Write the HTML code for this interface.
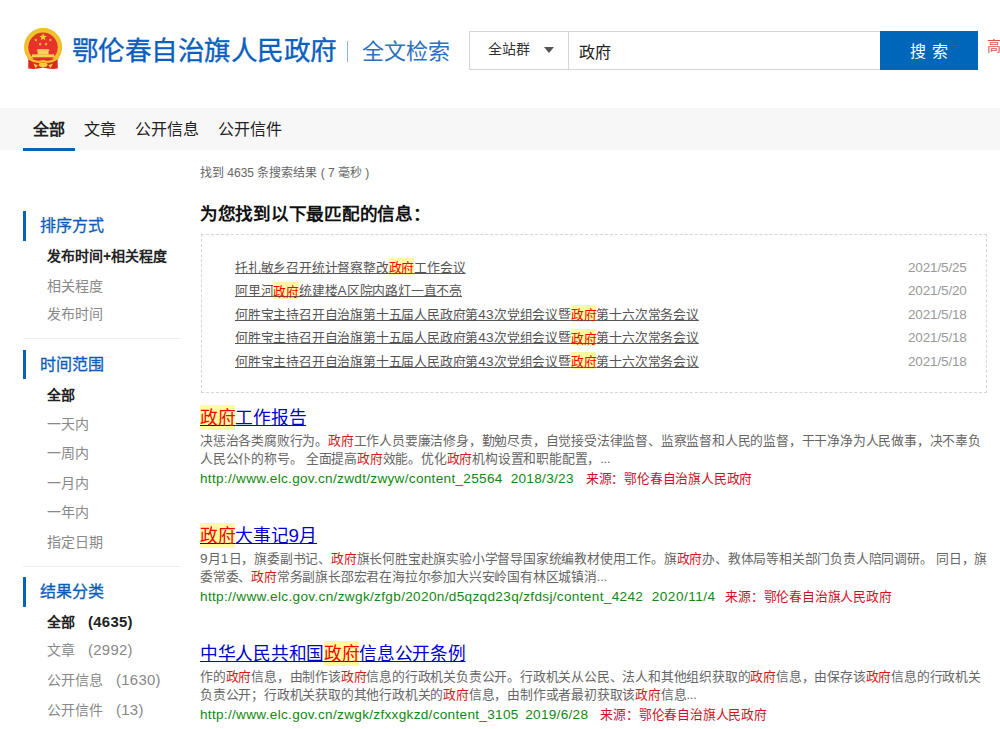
<!DOCTYPE html>
<html lang="zh-CN">
<head>
<meta charset="utf-8">
<style>
*{margin:0;padding:0;box-sizing:border-box}
html,body{width:1000px;height:729px;overflow:hidden;background:#fff}
body{font-family:"Liberation Sans",sans-serif;color:#333;position:relative}
.a{position:absolute;white-space:nowrap}
#title{left:72px;top:30.7px;font-size:26.6px;letter-spacing:-0.55px;line-height:40px;color:#0b5fbf;-webkit-text-stroke:.35px #0b5fbf}
#sep{left:347px;top:41px;width:1px;height:21px;background:#8fb1dc}
#sub{left:362px;top:34.5px;font-size:22px;line-height:34px;color:#2c71c0}
#sbox{left:469px;top:31px;width:412px;height:39px;border:1px solid #d4d4d4}
#sdrop{left:488px;top:40px;font-size:14px;line-height:18px;color:#333}
#caret{left:544px;top:47px;width:0;height:0;border-left:5px solid transparent;border-right:5px solid transparent;border-top:6px solid #555}
#sdiv{left:568px;top:31px;width:1px;height:39px;background:#d4d4d4}
#sinput{left:579px;top:43px;font-size:16px;line-height:20px;color:#222}
#sbtn{left:880px;top:31px;width:98px;height:39px;background:#0066b7;color:#fff;font-size:16px;line-height:41px;text-align:center;letter-spacing:6px;padding-left:6px}
#adv{left:987px;top:37px;font-size:14px;line-height:18px;color:#d9534f}
#nav{left:0;top:108px;width:1000px;height:42px;background:#f7f7f7}
.nv{position:absolute;top:0;height:43px;line-height:44.5px;font-size:16px;color:#222;padding:0 10px}
.nv.on{font-weight:bold;border-bottom:3px solid #0b62b5}
.bar{position:absolute;left:23px;width:3px;background:#0b62b5}
.sh{position:absolute;left:40px;font-size:16px;line-height:20px;color:#0b5cb8;-webkit-text-stroke:.3px #0b5cb8;white-space:nowrap}
.si{position:absolute;left:47px;font-size:14px;line-height:18px;color:#888;white-space:nowrap}
.si.on{color:#222;font-weight:bold}
.si .L{font-size:14.9px;letter-spacing:.3px}
.si .pp{margin-left:13px}
.hr{position:absolute;left:23px;width:158px;height:1px;background:#eee}
#stat{left:200px;top:164px;font-size:12px;line-height:18px;color:#666}
#best{left:200px;top:203px;font-size:17.6px;letter-spacing:-0.27px;line-height:22px;color:#111;font-weight:bold}
#box{position:absolute;left:201px;top:234px;width:786px;height:159px;border:1px dashed #d6d6d6}
.br{position:absolute;left:235px;font-size:12.8px;letter-spacing:-0.2px;line-height:18px;color:#555;text-decoration:underline;white-space:nowrap}
.br .L{font-size:13.6px;letter-spacing:.3px}
.br .k{color:#f00;background:#fffba0;padding:1.6px 0 0.4px}
.bd{position:absolute;left:908px;font-size:13.5px;letter-spacing:-.15px;line-height:18px;color:#999;white-space:nowrap}
.rt{position:absolute;left:200px;font-size:17.7px;letter-spacing:-0.3px;line-height:24px;color:#00c;text-decoration:underline;white-space:nowrap}
.rt .k{color:#f00;background:#fffba0;padding:3px 0 2px}
.rt .L{font-size:18.8px;letter-spacing:.3px}
.rs{position:absolute;left:200px;width:788px;font-size:12.8px;letter-spacing:-0.2px;line-height:18.4px;color:#666}
.rs .k{color:#d41a1a}
.rs .L{font-size:13.6px;letter-spacing:.3px}
.ru{position:absolute;left:200px;font-size:12.8px;letter-spacing:-0.2px;line-height:18px;color:#118811;white-space:nowrap}
.ru .L{font-size:13.6px;letter-spacing:.3px}
.ru .d{margin-left:8px}
.ru .src{color:#d0102a;margin-left:12px}
</style>
</head>
<body>
<svg id="emblem" width="70" height="75" viewBox="0 0 70 75" style="position:absolute;left:0;top:0">
  <circle cx="43.1" cy="47.1" r="19" fill="#f3c22f"/>
  <circle cx="43.1" cy="47.1" r="18.3" fill="none" stroke="#eab624" stroke-width="0.7"/>
  <circle cx="43" cy="47.3" r="14.7" fill="#e6322a"/>
  <polygon points="43.10,33.20 44.13,35.68 46.81,35.89 44.77,37.64 45.39,40.26 43.10,38.86 40.81,40.26 41.43,37.64 39.39,35.89 42.07,35.68" fill="#f5cf3a"/><polygon points="35.90,38.30 36.35,39.38 37.52,39.47 36.63,40.24 36.90,41.38 35.90,40.77 34.90,41.38 35.17,40.24 34.28,39.47 35.45,39.38" fill="#f5cf3a"/><polygon points="50.40,38.30 50.85,39.38 52.02,39.47 51.13,40.24 51.40,41.38 50.40,40.77 49.40,41.38 49.67,40.24 48.78,39.47 49.95,39.38" fill="#f5cf3a"/><polygon points="40.10,42.50 40.55,43.58 41.72,43.67 40.83,44.44 41.10,45.58 40.10,44.97 39.10,45.58 39.37,44.44 38.48,43.67 39.65,43.58" fill="#f5cf3a"/><polygon points="46.10,42.50 46.55,43.58 47.72,43.67 46.83,44.44 47.10,45.58 46.10,44.97 45.10,45.58 45.37,44.44 44.48,43.67 45.65,43.58" fill="#f5cf3a"/>
  <rect x="37.6" y="50.6" width="11" height="4" fill="#f6d458"/>
  <path d="M36.4 50.8 L37.8 49.3 L48.4 49.3 L49.8 50.8 Z" fill="#f8dc6a"/>
  <rect x="32" y="54.4" width="22.2" height="2.9" fill="#f6d24e"/>
  <path d="M28.3 58.4 Q43 60 57.6 58.4 L57.8 68.6 Q50 69.6 43 67.6 Q36 69.6 28.2 68.6 Z" fill="#d92a1e"/>
  <path d="M27.5 57.2 Q35 63.8 43.1 61 Q51 63.8 58.7 57.2" fill="none" stroke="#f3c22f" stroke-width="2.3"/>
  <ellipse cx="43.1" cy="64.8" rx="4.4" ry="2.3" fill="#f5cf3a"/>
  <path d="M33.2 63.4 L35.6 68 L38 65.2 Z M53 63.4 L50.6 68 L48.2 65.2 Z" fill="#f5d03e"/>
</svg>
<div id="title" class="a">鄂伦春自治旗人民政府</div>
<div id="sep" class="a"></div>
<div id="sub" class="a">全文检索</div>
<div id="sbox" class="a"></div>
<div id="sdrop" class="a">全站群</div>
<div id="caret" class="a"></div>
<div id="sdiv" class="a"></div>
<div id="sinput" class="a">政府</div>
<div id="sbtn" class="a">搜索</div>
<div id="adv" class="a">高级检索</div>
<div id="nav" class="a">
  <div class="nv on" style="left:23px">全部</div>
  <div class="nv" style="left:74px">文章</div>
  <div class="nv" style="left:125px">公开信息</div>
  <div class="nv" style="left:208px">公开信件</div>
</div>
<div class="bar" style="top:211px;height:30px"></div>
<div class="sh" style="top:216px">排序方式</div>
<div class="si on" style="top:247px">发布时间+相关程度</div>
<div class="si" style="top:276.5px">相关程度</div>
<div class="si" style="top:305.3px">发布时间</div>
<div class="hr" style="top:338px"></div>
<div class="bar" style="top:349.5px;height:29px"></div>
<div class="sh" style="top:355px">时间范围</div>
<div class="si on" style="top:386px">全部</div>
<div class="si" style="top:414.5px">一天内</div>
<div class="si" style="top:444.3px">一周内</div>
<div class="si" style="top:474px">一月内</div>
<div class="si" style="top:503px">一年内</div>
<div class="si" style="top:532.5px">指定日期</div>
<div class="hr" style="top:566px"></div>
<div class="bar" style="top:576.5px;height:30px"></div>
<div class="sh" style="top:582px">结果分类</div>
<div class="si on" style="top:613px">全部<span class="L pp">(4635)</span></div>
<div class="si" style="top:641px">文章<span class="L pp">(2992)</span></div>
<div class="si" style="top:671.3px">公开信息<span class="L pp">(1630)</span></div>
<div class="si" style="top:701px">公开信件<span class="L pp">(13)</span></div>
<div id="stat" class="a">找到 4635 条搜索结果 ( 7 毫秒 )</div>
<div id="best" class="a">为您找到以下最匹配的信息：</div>
<div id="box"></div>
<div class="br" style="top:258.6px">托扎敏乡召开统计督察整改<span class="k">政府</span>工作会议</div><div class="bd" style="top:258.5px">2021/5/25</div>
<div class="br" style="top:282.2px">阿里河<span class="k">政府</span>统建楼<span class="L">A</span>区院内路灯一直不亮</div><div class="bd" style="top:282.1px">2021/5/20</div>
<div class="br" style="top:305.8px">何胜宝主持召开自治旗第十五届人民政府第<span class="L">43</span>次党组会议暨<span class="k">政府</span>第十六次常务会议</div><div class="bd" style="top:305.7px">2021/5/18</div>
<div class="br" style="top:329.4px">何胜宝主持召开自治旗第十五届人民政府第<span class="L">43</span>次党组会议暨<span class="k">政府</span>第十六次常务会议</div><div class="bd" style="top:329.3px">2021/5/18</div>
<div class="br" style="top:353.0px">何胜宝主持召开自治旗第十五届人民政府第<span class="L">43</span>次党组会议暨<span class="k">政府</span>第十六次常务会议</div><div class="bd" style="top:352.9px">2021/5/18</div>
<div class="rt" style="top:406.0px"><span class="k">政府</span>工作报告</div>
<div class="rs" style="top:431.6px">决惩治各类腐败行为。<span class="k">政府</span>工作人员要廉洁修身，勤勉尽责，自觉接受法律监督、监察监督和人民的监督，干干净净为人民做事，决不辜负人民公仆的称号。 全面提高<span class="k">政府</span>效能。优化<span class="k">政府</span>机构设置和职能配置，...</div>
<div class="ru" style="top:470.0px"><span class="L" style="letter-spacing:0.3px">http://www.elc.gov.cn/zwdt/zwyw/content_25564</span><span class="L d" style="margin-left:8px;letter-spacing:0.3px">2018/3/23</span><span class="src" style="margin-left:12px">来源：鄂伦春自治旗人民政府</span></div>
<div class="rt" style="top:524.0px"><span class="k">政府</span>大事记<span class="L">9</span>月</div>
<div class="rs" style="top:549.6px"><span class="L">9</span>月<span class="L">1</span>日，旗委副书记、<span class="k">政府</span>旗长何胜宝赴旗实验小学督导国家统编教材使用工作。旗<span class="k">政府</span>办、教体局等相关部门负责人陪同调研。 同日，旗委常委、<span class="k">政府</span>常务副旗长邵宏君在海拉尔参加大兴安岭国有林区城镇消...</div>
<div class="ru" style="top:588.0px"><span class="L" style="letter-spacing:0.33px">http://www.elc.gov.cn/zwgk/zfgb/2020n/d5qzqd23q/zfdsj/content_4242</span><span class="L d" style="margin-left:8.5px;letter-spacing:0.5px">2020/11/4</span><span class="src" style="margin-left:9.5px">来源：鄂伦春自治旗人民政府</span></div>
<div class="rt" style="top:642.0px">中华人民共和国<span class="k">政府</span>信息公开条例</div>
<div class="rs" style="top:667.6px">作的<span class="k">政府</span>信息，由制作该<span class="k">政府</span>信息的行政机关负责公开。行政机关从公民、法人和其他组织获取的<span class="k">政府</span>信息，由保存该<span class="k">政府</span>信息的行政机关负责公开；行政机关获取的其他行政机关的<span class="k">政府</span>信息，由制作或者最初获取该<span class="k">政府</span>信息...</div>
<div class="ru" style="top:706.0px"><span class="L" style="letter-spacing:0.3px">http://www.elc.gov.cn/zwgk/zfxxgkzd/content_3105</span><span class="L d" style="margin-left:6.5px;letter-spacing:0.3px">2019/6/28</span><span class="src" style="margin-left:12px">来源：鄂伦春自治旗人民政府</span></div>
</body>
</html>
